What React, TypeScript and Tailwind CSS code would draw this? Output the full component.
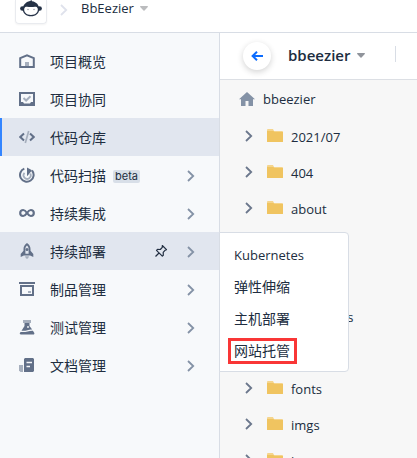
import type { ReactNode } from "react";

const textFont = "font-['Open_Sans','Noto_Sans_CJK_SC',sans-serif]";

function ChevronRight({ className }: { className: string }) {
  return (
    <svg viewBox="0 0 8 12" className={`h-3 w-2 ${className}`} fill="none" stroke="currentColor" strokeWidth="1.8" aria-hidden="true">
      <path d="M1 1l5.2 5L1 11" />
    </svg>
  );
}

function Caret({ className }: { className: string }) {
  return (
    <svg viewBox="0 0 8 5" className={`h-[5px] w-2 ${className}`} fill="currentColor" aria-hidden="true">
      <path d="M0.6 0h6.8c.5 0 .7.5.4.9L4.5 4.6a.7.7 0 0 1-1 0L.2.9C-.1.5.1 0 .6 0z" />
    </svg>
  );
}

function Glyph({ children }: { children: ReactNode }) {
  return (
    <svg viewBox="0 0 16 16" className="size-4 shrink-0 text-[#627088]" fill="none" stroke="currentColor" strokeWidth="2" aria-hidden="true">
      {children}
    </svg>
  );
}

const icons = {
  overview: (
    <Glyph>
      <path d="M1.2 14V5.200L8 2.300l6.800 2.900V14z" strokeWidth="2" />
      <path d="M6 9h4v4H6z" fill="#a6afbd" stroke="none" />
    </Glyph>
  ),
  collab: (
    <Glyph>
      <path d="M1 2h14v12H1z" strokeWidth="2" />
      <path d="M1 11h3l1 1.500h6l1-1.500h3v4H1z" fill="currentColor" stroke="none" />
      <path d="M4.500 7l2.600 2.500 4.400-4.300" stroke="#a6afbd" strokeWidth="2" />
    </Glyph>
  ),
  code: (
    <Glyph>
      <path d="M5 4.500L1.300 8 5 11.500M11 4.500L14.700 8 11 11.500" strokeWidth="2" />
      <path d="M9.700 2L6.300 14" stroke="#a6afbd" strokeWidth="1.700" />
    </Glyph>
  ),
  scan: (
    <Glyph>
      <path d="M5.300 1.600A6.800 6.800 0 1 0 13 3.500" strokeWidth="2" />
      <path d="M5.500 5.800a3.600 3.600 0 1 0 5.800.700" stroke="#a6afbd" strokeWidth="1.700" />
      <path d="M8 0.500L13 3.200 8.600 8.800H8z" fill="currentColor" stroke="none" />
    </Glyph>
  ),
  infinity: (
    <Glyph>
      <path d="M8 8C6.600 5.800 5.500 5 4.200 5a3 3 0 0 0 0 6C5.500 11 6.600 10.200 8 8s2.500-3 3.800-3a3 3 0 0 1 0 6C10.500 11 9.400 10.200 8 8z" strokeWidth="2.200" />
    </Glyph>
  ),
  rocket: (
    <Glyph>
      <path d="M8 0C5.700 1.500 4.500 3.700 4.500 6v1.800L1.700 11v3l3.200-1.600h6.200l3.200 1.600v-3l-2.800-3.200V6C11.500 3.700 10.300 1.500 8 0zM8 2.500c1 1 1.600 2 1.600 3.500v4.800H6.400V6c0-1.500.6-2.500 1.600-3.500z" fill="currentColor" fillRule="evenodd" stroke="none" />
      <circle cx="8" cy="6.500" r="1.500" fill="currentColor" stroke="none" />
      <path d="M6 13.200h4L9.300 15 8 16l-1.300-1z" fill="#a6afbd" stroke="none" />
    </Glyph>
  ),
  artifact: (
    <Glyph>
      <path d="M0 2h16M2 5h12v9H2z" strokeWidth="2" />
      <path d="M9 10h3v2H9z" fill="#a6afbd" stroke="none" />
    </Glyph>
  ),
  test: (
    <Glyph>
      <path d="M4 1h8v3H4z" fill="#a6afbd" stroke="none" />
      <path d="M5.500 4h5v3l2.700 3.500c-3-.6-6.600 2-10.700 1.200L5.500 7zM1.700 12.900c5 .8 8-1.500 12.200-1.200l1.300 2c.5.900.1 1.800-1 1.800H2c-1.200 0-1.500-.8-1-1.700z" fill="currentColor" stroke="none" />
      <circle cx="9" cy="8" r=".9" fill="#f7f8fa" stroke="none" />
    </Glyph>
  ),
  docs: (
    <Glyph>
      <path d="M6 1h8l1 1v12l-1 1H5V2z" fill="currentColor" stroke="none" />
      <path d="M0 8h4v7H1.500L0 13.500z" fill="#a6afbd" stroke="none" />
      <path d="M7.500 5.500H13M7.500 9.500h3.500" stroke="#f7f8fa" strokeWidth="1.700" />
    </Glyph>
  ),
};

type Item = { label: string; icon: ReactNode; arrow?: boolean; beta?: boolean; current?: boolean; open?: boolean };

const items: Item[] = [
  { label: "项目概览", icon: icons.overview },
  { label: "项目协同", icon: icons.collab },
  { label: "代码仓库", icon: icons.code, current: true },
  { label: "代码扫描", icon: icons.scan, arrow: true, beta: true },
  { label: "持续集成", icon: icons.infinity, arrow: true },
  { label: "持续部署", icon: icons.rocket, arrow: true, open: true },
  { label: "制品管理", icon: icons.artifact, arrow: true },
  { label: "测试管理", icon: icons.test, arrow: true },
  { label: "文档管理", icon: icons.docs, arrow: true },
];

const deployLinks = [
  { label: "Kubernetes", style: "border-transparent text-[13px]" },
  { label: "弹性伸缩", style: "border-transparent" },
  { label: "主机部署", style: "border-transparent" },
  { label: "网站托管", style: "border-[#f93636]" },
];
const folders = ["2021/07", "404", "about", "archives", "assets", "categories", "css", "fonts", "imgs", "js"];

function DeployMenu() {
  return (
    <ul className="absolute top-0 left-full z-10 w-[130px] rounded-r-sm border border-[#d8dde5] bg-white pt-1.5 pb-1">
      {deployLinks.map(({ label, style }) => (
        <li key={label} className="flex h-8 items-center px-2">
          <a href="#" className={`border-3 pr-1 pl-[3px] leading-5 ${style}`}>
            {label}
          </a>
        </li>
      ))}
    </ul>
  );
}

function NavItem({ item }: { item: Item }) {
  const tone = item.current
    ? "border-[#3385ff] bg-[#e1e6ef]"
    : item.open
      ? "border-[#e1e6ef] bg-[#e1e6ef]"
      : "border-transparent";
  return (
    <li className="relative">
      <div className={`flex h-[38px] items-center border-l-2 pr-6 pl-[17px] ${tone}`}>
        <a href="#" className="flex flex-1 items-center">
          {item.icon}
          <span className="ml-[15px] pt-0.5">{item.label}</span>
          {item.beta && (
            <span className="mt-0.5 ml-[7px] rounded-xs bg-[#d8dfe8] px-0.5 font-['Inter',sans-serif] text-[11px] leading-[13px]">beta</span>
          )}
        </a>
        {item.open && (
          <button type="button" aria-label="固定" className="mr-[19px]">
            <svg viewBox="0 0 14 14" className="block size-3.5" fill="none" stroke="currentColor" strokeWidth="1.200" strokeLinejoin="round" aria-hidden="true">
              <path d="M8.300 1.500l4.200 4.200-1.300.5-2 2.100.1 2.900-1 .9-5.800-5.700 1-1 2.800.1 2-2.200zM5 9L1.500 12.500" />
            </svg>
          </button>
        )}
        {item.arrow && <ChevronRight className="mt-0.5 text-[#8492a6]" />}
      </div>
      {item.open && <DeployMenu />}
    </li>
  );
}

export default function App() {
  return (
    <div className={`flex h-screen flex-col overflow-hidden bg-white text-sm text-[#202d40] ${textFont}`}>
      <header className="flex h-[33px] shrink-0 items-start border-b border-[#d8dde5] pl-[15px]">
        <a href="#" aria-label="主页" className="flex h-6 w-8 shrink-0 justify-center rounded-b border border-t-0 border-[#e9ebef] shadow-xs">
          <svg viewBox="0 0 22 17" className="h-[17px] w-[22px]" aria-hidden="true">
            <ellipse cx="2.500" cy="8.500" rx="2.400" ry="2.300" fill="#253247" />
            <ellipse cx="19.500" cy="8.500" rx="2.400" ry="2.300" fill="#253247" />
            <path d="M10 1l1.500-1 .5 1.300C16.500 2 19 5 19.300 9c0 4.500-3.700 7.300-8.300 7.300S2.700 13.500 2.700 9C3 5 5.500 2 10 1z" fill="#253247" />
            <path d="M4.300 8.500C5 5.800 8 7 11 7s6-1.200 6.700 1.500C18.500 12.300 15.500 14.900 11 14.900S3.500 12.300 4.300 8.500z" fill="#fff" />
            <circle cx="8" cy="9.500" r=".7" fill="#8b93a1" />
            <circle cx="14" cy="9.500" r=".7" fill="#8b93a1" />
          </svg>
        </a>
        <ChevronRight className="mt-1 ml-[13px] text-[#dfe2ec]" />
        <button type="button" className="ml-[13px] flex h-[17px] items-center gap-1.5 text-[13px] leading-[17px]">
          BbEezier
          <Caret className="text-[#bbbcbe]" />
        </button>
      </header>

      <div className="flex min-h-0 flex-1">
        <nav className="relative z-10 w-[220px] shrink-0 border-r border-[#d8dde5] bg-[#f7f9fb] pt-[9px]">
          <ul>
            {items.map((item) => (
              <NavItem key={item.label} item={item} />
            ))}
          </ul>
        </nav>

        <main className="flex min-w-0 flex-1 flex-col bg-[#f7f7f7] text-[13px]">
          <div className="flex h-[47px] shrink-0 items-center border-b border-[#dcdfe4] bg-white pl-[23px]">
            <button type="button" aria-label="返回" className="flex size-7 items-center justify-center rounded-full bg-white shadow-[0_2px_6px_rgba(0,0,0,0.18)]">
              <svg viewBox="0 0 12 10" className="h-2.5 w-3" fill="none" stroke="#0b6cff" strokeWidth="2" aria-hidden="true">
                <path d="M12 5H1.500M6 .7L1.600 5 6 9.300" />
              </svg>
            </button>
            <button type="button" className="ml-[17px] flex items-center gap-[7px] text-[15px] font-semibold">
              bbeezier
              <Caret className="text-[#90949b]" />
            </button>
            <span className="-mt-1 ml-[30px] h-4 border-l border-[#d8dde5]" />
          </div>
          <div className="flex h-[39px] shrink-0 items-center gap-2 pl-[19px]">
            <svg viewBox="0 0 16 14" className="-mt-0.5 h-3.5 w-4 text-[#8492a6]" fill="currentColor" aria-hidden="true">
              <path d="M8 0l8 7.300h-2V14H9.500V9h-3v5H2V7.300H0z" />
            </svg>
            <a href="#">bbeezier</a>
          </div>
          <ul>
            {folders.map((name) => (
              <li key={name} className="flex h-9 items-center pl-[25px]">
                <button type="button" aria-label={`展开 ${name}`} className="-mt-0.5">
                  <ChevronRight className="text-[#6b778c]" />
                </button>
                <svg viewBox="0 0 16 14" className="-mt-0.5 ml-3.5 h-3.5 w-4 shrink-0" aria-hidden="true">
                  <path d="M0 1q0-1 1-1h5l1 2h8q1 0 1 1v4H0z" fill="#f5d58d" />
                  <path d="M0 2h6.500l1 1H16v9.500q0 .5-.5.5H.5q-.5 0-.5-.5z" fill="#f0c460" />
                </svg>
                <a href="#" className="ml-2">{name}</a>
              </li>
            ))}
          </ul>
        </main>
      </div>
    </div>
  );
}
